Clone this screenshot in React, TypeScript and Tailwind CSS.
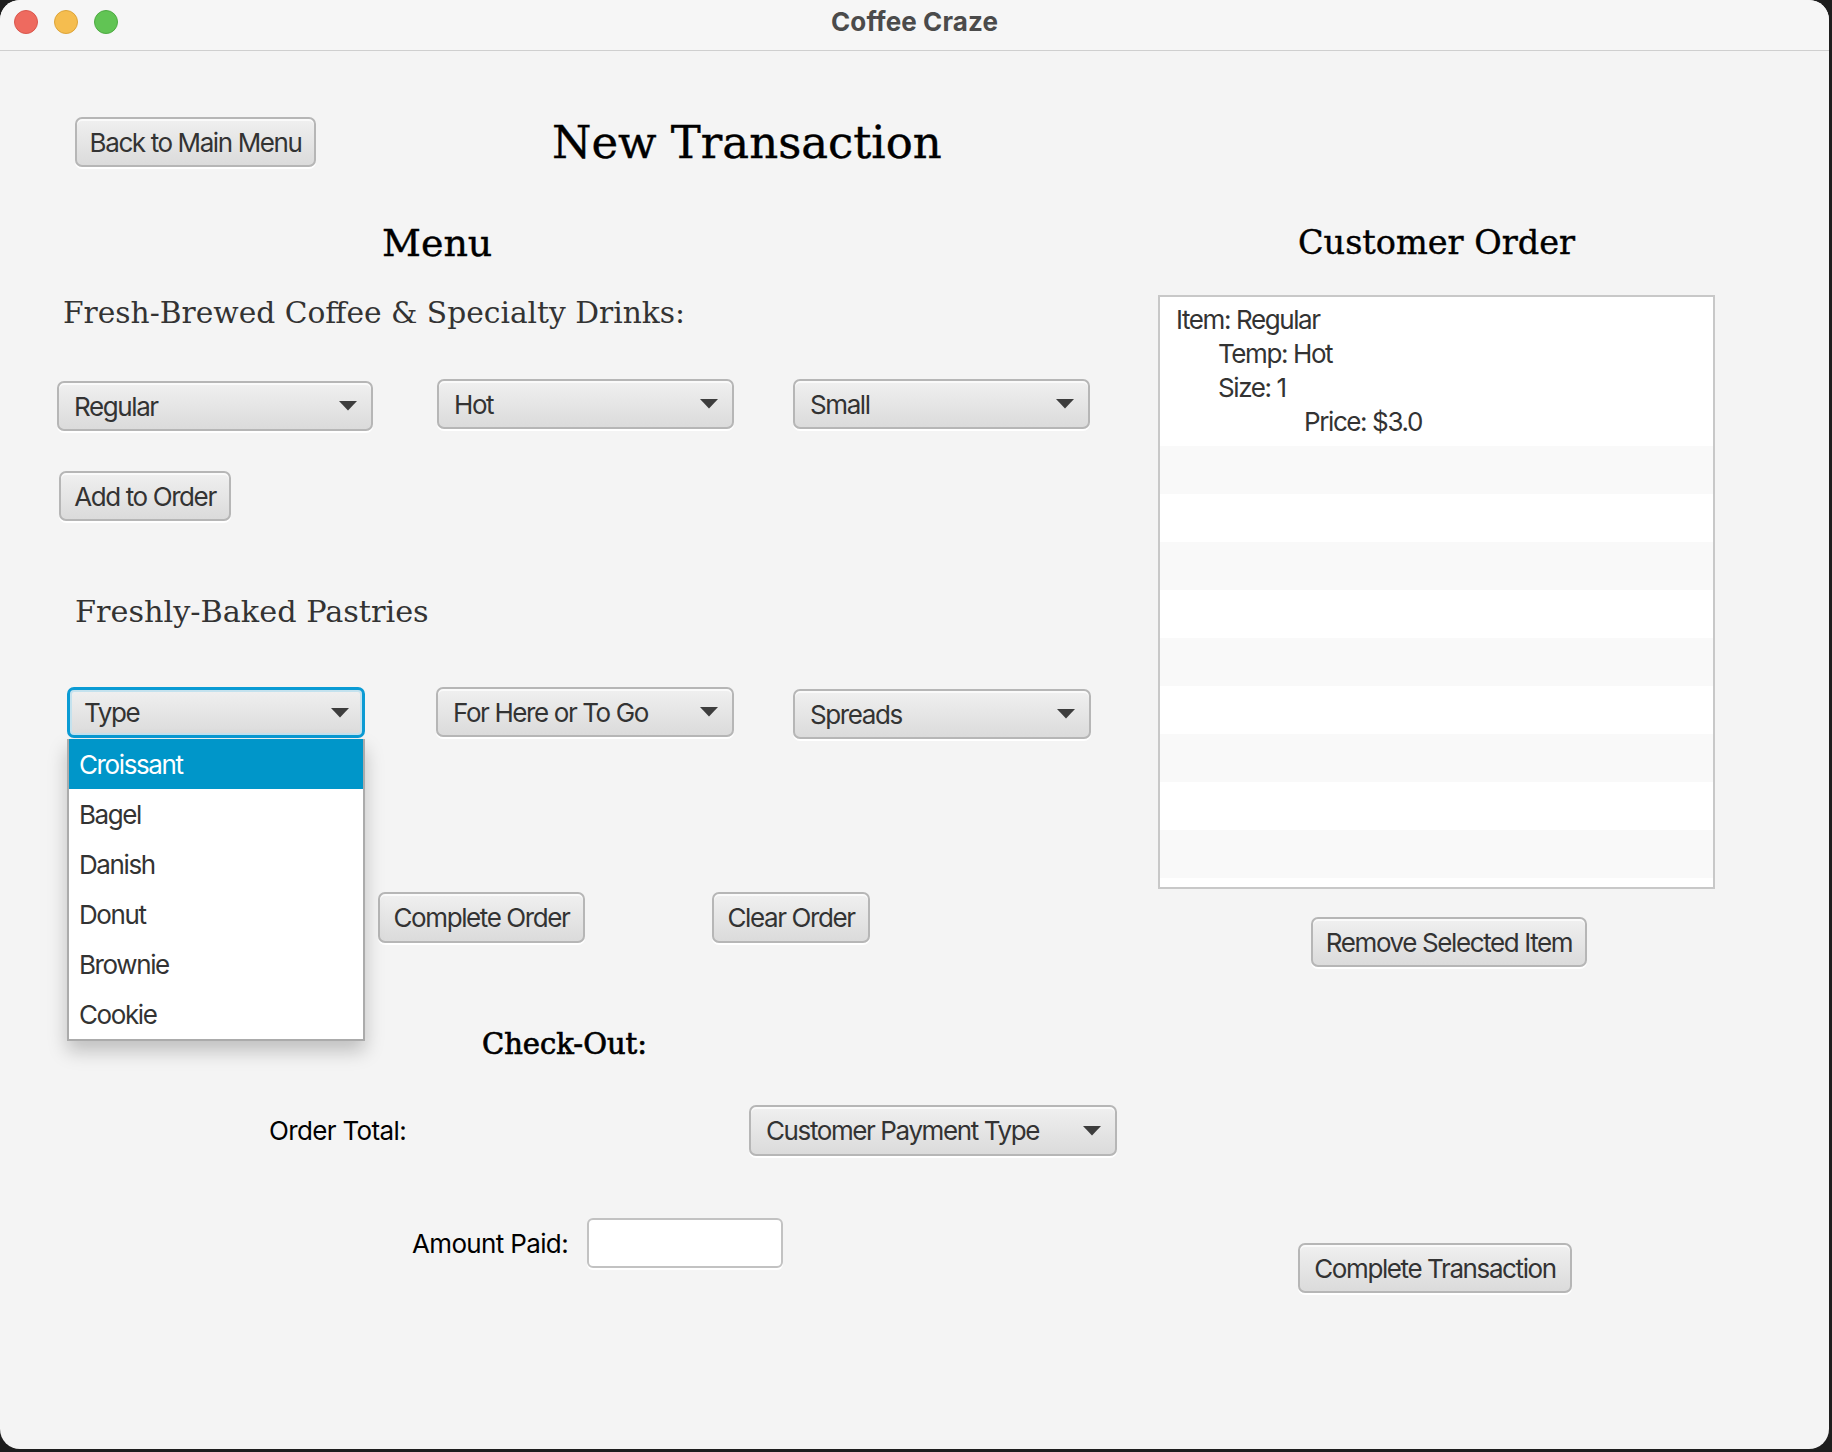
import { Fragment } from 'react'

const sans = "font-['Inter','Liberation_Sans',sans-serif]"
const serif = "font-['DejaVu_Serif','Liberation_Serif',serif]"

interface BtnProps {
  label: string
  className?: string
}

const Button = ({ label, className = '' }: BtnProps) => (
  <div
    className={`flex items-center justify-center rounded-[7px] border-2 border-[#b6b6b6] bg-linear-to-b from-[#f0f0f0] to-[#dbdbdb] text-[26px] text-[#333] tracking-[-1.4px] shadow-[inset_0_2px_0_#fafafa,0_2px_0_#ffffff] ${sans} ${className}`}
  >
    {label}
  </div>
)

const Arrow = () => (
  <svg width="18" height="10" viewBox="0 0 18 10" className="shrink-0">
    <path d="M0 0 H18 L9 9.5 Z" fill="#3d3d3d" />
  </svg>
)

interface ComboProps {
  label: string
  className?: string
  focused?: boolean
}

const Combo = ({ label, className = '', focused = false }: ComboProps) => (
  <div
    className={`relative flex items-center justify-between rounded-[7px] bg-linear-to-b from-[#f0f0f0] to-[#dbdbdb] text-[26px] text-[#333] tracking-[-1.4px] ${sans} ${
      focused
        ? 'border-[3px] border-[#0a9bd4] pl-[14px] pr-[13px] shadow-[inset_0_0_0_2px_#c4e2ee]'
        : 'border-2 border-[#b6b6b6] pl-[15px] pr-[14px] shadow-[inset_0_2px_0_#fafafa,0_2px_0_#ffffff]'
    } ${className}`}
  >
    <span>{label}</span>
    <Arrow />
  </div>
)

const pastries = ['Croissant', 'Bagel', 'Danish', 'Donut', 'Brownie', 'Cookie']

const orderLines = [
  { text: 'Item: Regular', indent: 'pl-0' },
  { text: 'Temp: Hot', indent: 'pl-[42px]' },
  { text: 'Size: 1', indent: 'pl-[42px]' },
  { text: 'Price: $3.0', indent: 'pl-[128px]' },
]

const App = () => {
  return (
    <div className="w-[1832px] h-[1452px] bg-[#1e1e1e] overflow-hidden">
      <div className="w-[1829px] h-[1449px] rounded-[20px] bg-[#f4f4f4] overflow-hidden flex flex-col">
        {/* title bar */}
        <div className="h-[51px] shrink-0 grid grid-cols-[1fr_auto_1fr] items-center pb-[7px] border-b border-[#cfcfcf] bg-[#f6f6f6]">
          <div className="flex items-center gap-[16px] pl-[14px]">
            <span className="w-[24px] h-[24px] rounded-full bg-[#ee6a5f] border border-[#d9574d]" />
            <span className="w-[24px] h-[24px] rounded-full bg-[#f5bd4f] border border-[#dca43a]" />
            <span className="w-[24px] h-[24px] rounded-full bg-[#61c454] border border-[#4eaa43]" />
          </div>
          <div className={`text-[26px] font-bold text-[#4b4b4b] tracking-[0.1px] ${sans}`}>Coffee Craze</div>
          <div />
        </div>

        {/* header */}
        <div className="flex items-center pt-[66px]">
          <Button label="Back to Main Menu" className="ml-[75px] w-[241px] h-[50px]" />
          <div className={`ml-[236px] text-[45px] leading-none text-black [-webkit-text-stroke:0.4px_#000] ${serif}`}>
            New Transaction
          </div>
        </div>

        <div className="flex">
          {/* left: menu */}
          <div className="w-[1158px] flex flex-col">
            <div className={`mt-[56px] h-[40px] flex items-center pl-[382px] text-[38px] leading-none text-black [-webkit-text-stroke:0.4px_#000] ${serif}`}>
              Menu
            </div>
            <div className={`mt-[32px] h-[36px] flex items-center pl-[63px] text-[29.7px] leading-none text-[#333] ${serif}`}>
              Fresh-Brewed Coffee &amp; Specialty Drinks:
            </div>
            <div className="mt-[48px] flex items-start">
              <Combo label="Regular" className="ml-[57px] mt-[2px] w-[316px] h-[50px]" />
              <Combo label="Hot" className="ml-[64px] w-[297px] h-[50px]" />
              <Combo label="Small" className="ml-[59px] w-[297px] h-[50px]" />
            </div>
            <Button label="Add to Order" className="mt-[40px] ml-[59px] w-[172px] h-[50px]" />
            <div className={`mt-[73px] h-[36px] flex items-center pl-[75px] text-[30.3px] leading-none text-[#333] ${serif}`}>
              Freshly-Baked Pastries
            </div>
            <div className="mt-[57px] flex items-start">
              <div className="relative ml-[67px] w-[298px] h-[51px] z-10">
                <Combo label="Type" focused className="w-full h-full" />
                <div className={`absolute left-0 top-[52px] w-[298px] bg-white border-2 border-t-0 border-[#ababab] shadow-[0_10px_18px_rgba(0,0,0,0.22)] text-[26px] tracking-[-1.4px] ${sans}`}>
                  {pastries.map((p, i) => (
                    <div
                      key={p}
                      className={`h-[50px] flex items-center pl-[10px] ${i === 0 ? 'bg-[#0096c9] text-white' : 'text-[#333]'}`}
                    >
                      {p}
                    </div>
                  ))}
                </div>
              </div>
              <Combo label="For Here or To Go" className="ml-[71px] w-[298px] h-[50px]" />
              <Combo label="Spreads" className="ml-[59px] mt-[2px] w-[298px] h-[50px]" />
            </div>
            <div className="mt-[153px] flex items-center">
              <Button label="Complete Order" className="ml-[378px] w-[207px] h-[51px]" />
              <Button label="Clear Order" className="ml-[127px] w-[158px] h-[51px]" />
            </div>
            <div className={`mt-[83px] h-[36px] flex items-center pl-[482px] text-[29px] leading-none text-black [-webkit-text-stroke:0.7px_#000] ${serif}`}>
              Check-Out:
            </div>
            <div className="mt-[43px] flex items-center">
              <div className={`ml-[269px] w-[480px] text-[26px] text-black tracking-[-0.65px] ${sans}`}>Order Total:</div>
              <Combo label="Customer Payment Type" className="w-[368px] h-[51px]" />
            </div>
            <div className="mt-[62px] flex items-center">
              <div className={`ml-[412px] w-[175px] text-[26px] text-black tracking-[-0.65px] ${sans}`}>Amount Paid:</div>
              <div className="w-[196px] h-[50px] rounded-[6px] border-2 border-[#c2c2c2] bg-white shadow-[0_2px_0_#ffffff]" />
            </div>
          </div>

          {/* right: customer order */}
          <div className="w-[557px] flex flex-col">
            <div className={`mt-[56px] h-[40px] flex items-center justify-center text-[33.5px] leading-none text-black [-webkit-text-stroke:0.4px_#000] ${serif}`}>
              Customer Order
            </div>
            <div className={`mt-[32px] h-[594px] border-2 border-[#c8c8c8] bg-white overflow-hidden text-[26px] text-[#333] tracking-[-1.4px] ${sans}`}>
              <div className="h-[149px] pt-[6px] pl-[16px] leading-[34px]">
                {orderLines.map((l) => (
                  <div key={l.text} className={l.indent}>
                    {l.text}
                  </div>
                ))}
              </div>
              {Array.from({ length: 10 }).map((_, i) => (
                <Fragment key={i}>
                  <div className={`h-[48px] ${i % 2 === 0 ? 'bg-[#f9f9f9]' : 'bg-white'}`} />
                </Fragment>
              ))}
            </div>
            <Button label="Remove Selected Item" className="mt-[28px] ml-[153px] w-[276px] h-[50px]" />
            <Button label="Complete Transaction" className="mt-[276px] ml-[140px] w-[274px] h-[50px]" />
          </div>
        </div>
      </div>
    </div>
  )
}

export default App
